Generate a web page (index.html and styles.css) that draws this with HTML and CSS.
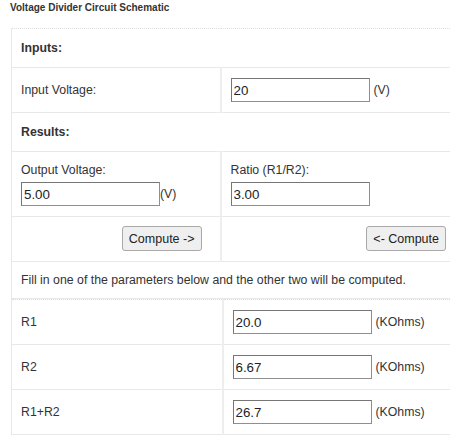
FILE: index.html
```html
<!DOCTYPE html>
<html lang="en">
<head>
  <meta charset="UTF-8">
  <title>Voltage Divider Calculator</title>
  <link rel="stylesheet" href="styles.css">
</head>
<body>
  <h1 class="title">Voltage Divider Circuit Schematic</h1>

  <!-- Voltage / ratio calculator -->
  <table class="calc">
    <tr>
      <th colspan="2" class="section">Inputs:</th>
    </tr>
    <tr>
      <td class="col-left">Input Voltage:</td>
      <td class="col-right"><span class="field"><input class="num" type="text" value="20">(V)</span></td>
    </tr>
    <tr>
      <th colspan="2" class="section">Results:</th>
    </tr>
    <tr>
      <td class="col-left">
        <div class="field-label">Output Voltage:</div>
        <span class="field field-tight"><input class="num" type="text" value="5.00">(V)</span>
      </td>
      <td class="col-right">
        <div class="field-label">Ratio (R1/R2):</div>
        <span class="field"><input class="num" type="text" value="3.00"></span>
      </td>
    </tr>
    <tr>
      <td class="col-left btn-cell"><button class="btn">Compute -&gt;</button></td>
      <td class="col-right btn-cell"><button class="btn">&lt;- Compute</button></td>
    </tr>
    <tr>
      <td colspan="2" class="note">Fill in one of the parameters below and the other two will be computed.</td>
    </tr>
  </table>

  <!-- Resistor values -->
  <table class="calc calc-res">
    <tr>
      <td class="col-left">R1</td>
      <td class="col-right"><span class="field"><input class="num" type="text" value="20.0">(KOhms)</span></td>
    </tr>
    <tr>
      <td class="col-left">R2</td>
      <td class="col-right"><span class="field"><input class="num" type="text" value="6.67">(KOhms)</span></td>
    </tr>
    <tr>
      <td class="col-left">R1+R2</td>
      <td class="col-right"><span class="field"><input class="num" type="text" value="26.7">(KOhms)</span></td>
    </tr>
  </table>
</body>
</html>
```

FILE: styles.css
```css
* {
  box-sizing: border-box;
}
body {
  margin: 0 0 0 10px;
  font-family: Arial, "Liberation Sans", sans-serif;
  font-size: 12.3px;
  color: #333;
  background: #fff;
  overflow: hidden;
}

/* Judul kecil di atas */
.title {
  margin: 2px 0 14px;
  font-size: 10px;
  line-height: 12px;
  font-weight: bold;
}

/* Tabel kalkulator */
.calc {
  width: 441px;
  margin-left: 1px;
  border-collapse: collapse;
  border-top: 1px dotted #ddd;
  border-left: 1px solid #e8e8e8;
}
.calc td,
.calc th {
  border: 1px solid #e8e8e8;
  border-top: none;
  border-right: none;
  padding: 10px 9px;
  line-height: 16px;
  text-align: left;
  vertical-align: middle;
}
.calc th.section {
  font-size: 12.3px;
  line-height: 18px;
  font-weight: bold;
}
.col-left {
  width: 209px;
  border-right: 2px solid #eee !important;
}
.calc-res .col-left {
  width: 211px;
}
.field-label {
  margin-bottom: 4px;
}

/* Kotak input dengan satuan di sebelahnya */
.field {
  display: inline-flex;
  align-items: center;
  gap: 4px;
}
.field-tight {
  gap: 0;
}
.num {
  width: 139px;
  height: 24px;
  padding: 1px 2px;
  border: 1px solid #8f8f8f;
  border-top-color: #767676;
  border-left-color: #767676;
  font-family: Arial, "Liberation Sans", sans-serif;
  font-size: 13.33px;
  color: #222;
}

/* Tombol Compute */
.btn-cell {
  text-align: right !important;
  padding: 9px 6px 10px !important;
}
.btn-cell.col-left {
  padding-right: 18px !important;
}
.btn {
  height: 25px;
  padding: 0 6px;
  border: 1px solid #a9a9a9;
  border-radius: 3px;
  background: #efefef;
  font-family: Arial, "Liberation Sans", sans-serif;
  font-size: 12.5px;
  color: #222;
  vertical-align: middle;
}

.note {
  line-height: 18px;
}
```
